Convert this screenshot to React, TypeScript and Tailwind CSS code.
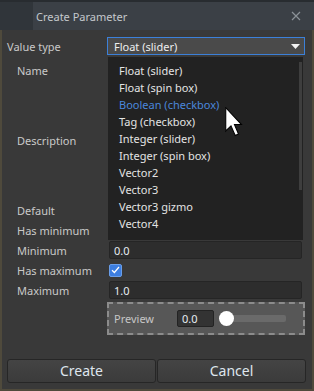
import React from "react";

const items = [
  "Float (slider)",
  "Float (spin box)",
  "Boolean (checkbox)",
  "Tag (checkbox)",
  "Integer (slider)",
  "Integer (spin box)",
  "Vector2",
  "Vector3",
  "Vector3 gizmo",
  "Vector4",
];

function Input({ value }: { value?: string }) {
  return (
    <div className="w-[193px] h-[18px] bg-[#2d2d2d] border border-[#252525] rounded-[2px] flex items-center pl-[4px] text-[#e6ecf2]">
      {value}
    </div>
  );
}

function Label({ children }: { children: React.ReactNode }) {
  return <div className="w-[107px] pl-[15px] text-[#c9c9c9] shrink-0">{children}</div>;
}

function Check({ checked }: { checked?: boolean }) {
  return checked ? (
    <div className="w-[13px] h-[13px] rounded-[2px] bg-[#3d7ee0] border border-[#6a9ee8] flex items-center justify-center">
      <svg width="9" height="8" viewBox="0 0 9 8">
        <path d="M1 4.2 L3.4 6.5 L8 1" fill="none" stroke="white" strokeWidth="1.2" />
      </svg>
    </div>
  ) : (
    <div className="w-[13px] h-[13px] rounded-[2px] bg-[#2d2d2d] border border-[#252525]" />
  );
}

export default function App() {
  return (
    <div className="relative w-[314px] h-[391px] bg-[#4f4a3c] overflow-hidden text-[11px] leading-none font-['Noto_Sans',sans-serif]">
      <div className="flex flex-col h-full">
        <div className="h-[30px] flex bg-[#3b4046] border-t-2 border-[#282c30] shrink-0">
          <div className="w-[33px] bg-[#30353a]" />
          <div className="flex-1 flex items-center pl-[3px] text-[#c4c8cc]">Create Parameter</div>
          <div className="w-[36px] flex items-center justify-center">
            <svg width="10" height="10" viewBox="0 0 10 10">
              <path d="M1 1 L9 9 M9 1 L1 9" stroke="#8b9197" strokeWidth="1.2" />
            </svg>
          </div>
        </div>
        <div className="flex-1 mx-[2px] mb-[2px] bg-[#393939] flex flex-col pt-[7px]">
          <div className="flex items-center h-[18px]">
            <div className="w-[105px] pl-[5px] text-[#c9c9c9] shrink-0">Value type</div>
            <div className="w-[198px] h-[18px] bg-[#4a4a4a] border border-[#3c80d8] flex items-center pl-[6px] pr-[4px] text-[#eeeeee]">
              <span className="flex-1">Float (slider)</span>
              <svg width="9" height="5" viewBox="0 0 9 5">
                <path d="M0 0 L9 0 L4.5 5 Z" fill="#f2f2f2" />
              </svg>
            </div>
          </div>
          <div className="flex flex-col gap-[4px] mt-[6px]">
            <div className="flex items-center h-[18px]">
              <Label>Name</Label>
              <Input />
            </div>
            <div className="flex items-center h-[114px]">
              <Label>Description</Label>
              <div className="w-[193px] h-[114px] bg-[#2d2d2d] border border-[#252525] rounded-[2px]" />
            </div>
            <div className="flex items-center h-[18px]">
              <Label>Default</Label>
              <Input />
            </div>
            <div className="flex items-center h-[14px]">
              <Label>Has minimum</Label>
              <Check />
            </div>
            <div className="flex items-center h-[18px]">
              <Label>Minimum</Label>
              <Input value="0.0" />
            </div>
            <div className="flex items-center h-[14px]">
              <Label>Has maximum</Label>
              <Check checked />
            </div>
            <div className="flex items-center h-[18px]">
              <Label>Maximum</Label>
              <Input value="1.0" />
            </div>
          </div>
          <div className="mt-[3px] pl-[105px]">
            <div className="w-[198px] h-[33px] border-2 border-dashed border-[#8c8c8c] bg-[#575757] flex items-center pl-[5px]">
              <span className="text-[#c6c6c6] w-[63px]">Preview</span>
              <div className="w-[37px] h-[17px] bg-[#333333] border border-[#232323] rounded-[2px] flex items-center pl-[4px] text-[#e6ecf2]">
                0.0
              </div>
              <div className="relative ml-[5px] w-[67px] h-[15px] flex items-center">
                <div className="absolute left-[7px] right-0 h-[7px] rounded-[2px] bg-[#6a6a6a]" />
                <div className="absolute left-0 w-[15px] h-[15px] rounded-full bg-white" />
              </div>
            </div>
          </div>
          <div className="flex-1" />
          <div className="flex gap-[1px] pl-[5px] mb-[6px]">
            <button className="w-[149px] h-[24px] rounded-[3px] border border-[#262626] bg-gradient-to-b from-[#444444] to-[#3b3b3b] text-[14px] text-[#dfe6ee] font-['Noto_Sans',sans-serif]">
              Create
            </button>
            <button className="w-[149px] h-[24px] rounded-[3px] border border-[#262626] bg-gradient-to-b from-[#444444] to-[#3b3b3b] text-[14px] text-[#dfe6ee] font-['Noto_Sans',sans-serif]">
              Cancel
            </button>
          </div>
        </div>
      </div>

      <div className="absolute left-[108px] top-[57px] w-[195px] h-[183px] bg-[#222222] pt-[5px]">
        {items.map((it, i) => (
          <div
            key={it}
            className={`h-[17px] flex items-center pl-[11px] ${i === 2 ? "text-[#4a87dc]" : "text-[#e4e4e4]"}`}
          >
            {it}
          </div>
        ))}
        <div className="absolute right-[1px] top-[5px] w-[3px] h-[128px] bg-[#3e3e3e]" />
      </div>

      <svg className="absolute left-[225px] top-[107px]" width="18" height="30" viewBox="0 0 12 20">
        <path d="M0.5 0.5 L0.5 16 L4 12.6 L6.8 19 L9 18 L6.3 11.7 L11 11.7 Z" fill="white" stroke="black" strokeWidth="0.7" />
      </svg>
    </div>
  );
}
